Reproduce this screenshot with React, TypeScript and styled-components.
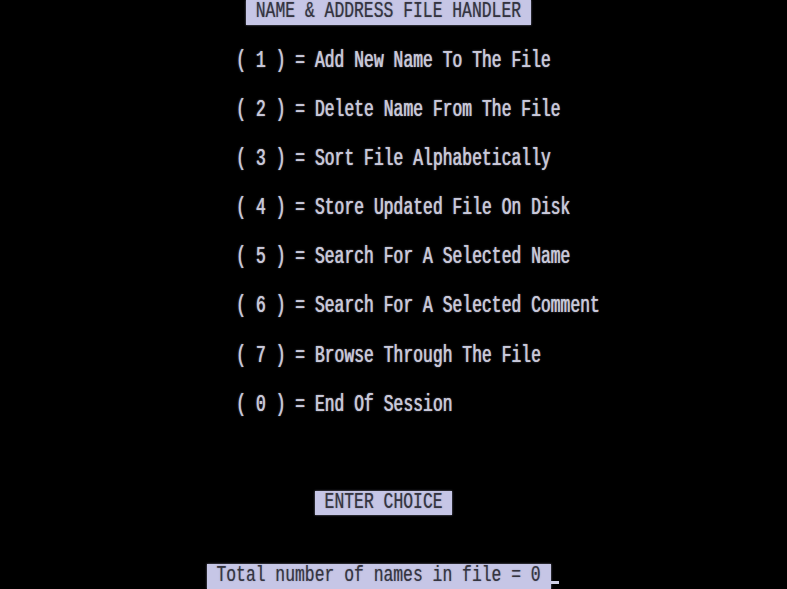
import React from 'react'
import styled, { createGlobalStyle } from 'styled-components'

// 80 x 24 text screen squeezed into 787 x 589
const CELL_W = 787 / 80
const CELL_H = 589 / 24

const GlobalStyle = createGlobalStyle`
  html, body {
    margin: 0;
    padding: 0;
    background: #000;
  }
  body {
    font-family: 'Liberation Mono', 'DejaVu Sans Mono', monospace;
  }
`

const Screen = styled.div`
  width: 787px;
  height: 589px;
  background: #000;
  overflow: hidden;
  display: flex;
  flex-direction: column;
`

const Row = styled.div<{ $col: number }>`
  height: ${CELL_H}px;
  flex: 0 0 ${CELL_H}px;
  padding-left: ${(p) => p.$col * CELL_W}px;
  display: flex;
  align-items: center;
  white-space: pre;
`

const Blank = styled.div`
  height: ${CELL_H}px;
  flex: 0 0 ${CELL_H}px;
`

const Glyphs = styled.span<{ $inverse?: boolean }>`
  display: inline-block;
  font-size: ${CELL_W / 0.6}px;
  line-height: 1;
  letter-spacing: 0;
  font-weight: 400;
  color: ${(p) => (p.$inverse ? '#34343f' : '#c9c9da')};
  transform: scaleY(${(p) => (p.$inverse ? 1.35 : 1.45)});
  text-shadow: ${(p) =>
    p.$inverse
      ? '0 0 1px rgba(40,40,60,0.5)'
      : '0.5px 0 0 rgba(201,201,218,0.85), 0 0 1.5px rgba(210,210,235,0.6)'};
`

const Inverse = styled.span`
  display: inline-flex;
  align-items: center;
  height: ${CELL_H}px;
  background: #c6c6e6;
  box-shadow: 0 0 2px rgba(198, 198, 230, 0.6);
`

const Cursor = styled.span`
  display: inline-block;
  width: ${CELL_W}px;
  height: ${CELL_H}px;
  position: relative;
  &::after {
    content: '';
    position: absolute;
    left: 0;
    right: 1px;
    bottom: 5px;
    height: 3px;
    background: #cfcfe6;
  }
`

const menu = [
  ['1', 'Add New Name To The File'],
  ['2', 'Delete Name From The File'],
  ['3', 'Sort File Alphabetically'],
  ['4', 'Store Updated File On Disk'],
  ['5', 'Search For A Selected Name'],
  ['6', 'Search For A Selected Comment'],
  ['7', 'Browse Through The File'],
  ['0', 'End Of Session']
]

const InverseText = ({ text }: { text: string }) => (
  <Inverse>
    <Glyphs $inverse>{` ${text} `}</Glyphs>
  </Inverse>
)

const App = () => {
  return (
    <>
      <GlobalStyle />
      <Screen>
        <Row $col={25}>
          <InverseText text='NAME & ADDRESS FILE HANDLER' />
        </Row>
        <Blank />
        {menu.map(([key, label], index) => (
          <React.Fragment key={`menu-${String(index)}`}>
            <Row $col={24}>
              <Glyphs>{`( ${key} ) = ${label}`}</Glyphs>
            </Row>
            <Blank />
          </React.Fragment>
        ))}
        <Blank />
        <Blank />
        <Row $col={32}>
          <InverseText text='ENTER CHOICE' />
        </Row>
        <Blank />
        <Blank />
        <Row $col={21}>
          <InverseText text='Total number of names in file = 0' />
          <Cursor />
        </Row>
      </Screen>
    </>
  )
}

export default App
